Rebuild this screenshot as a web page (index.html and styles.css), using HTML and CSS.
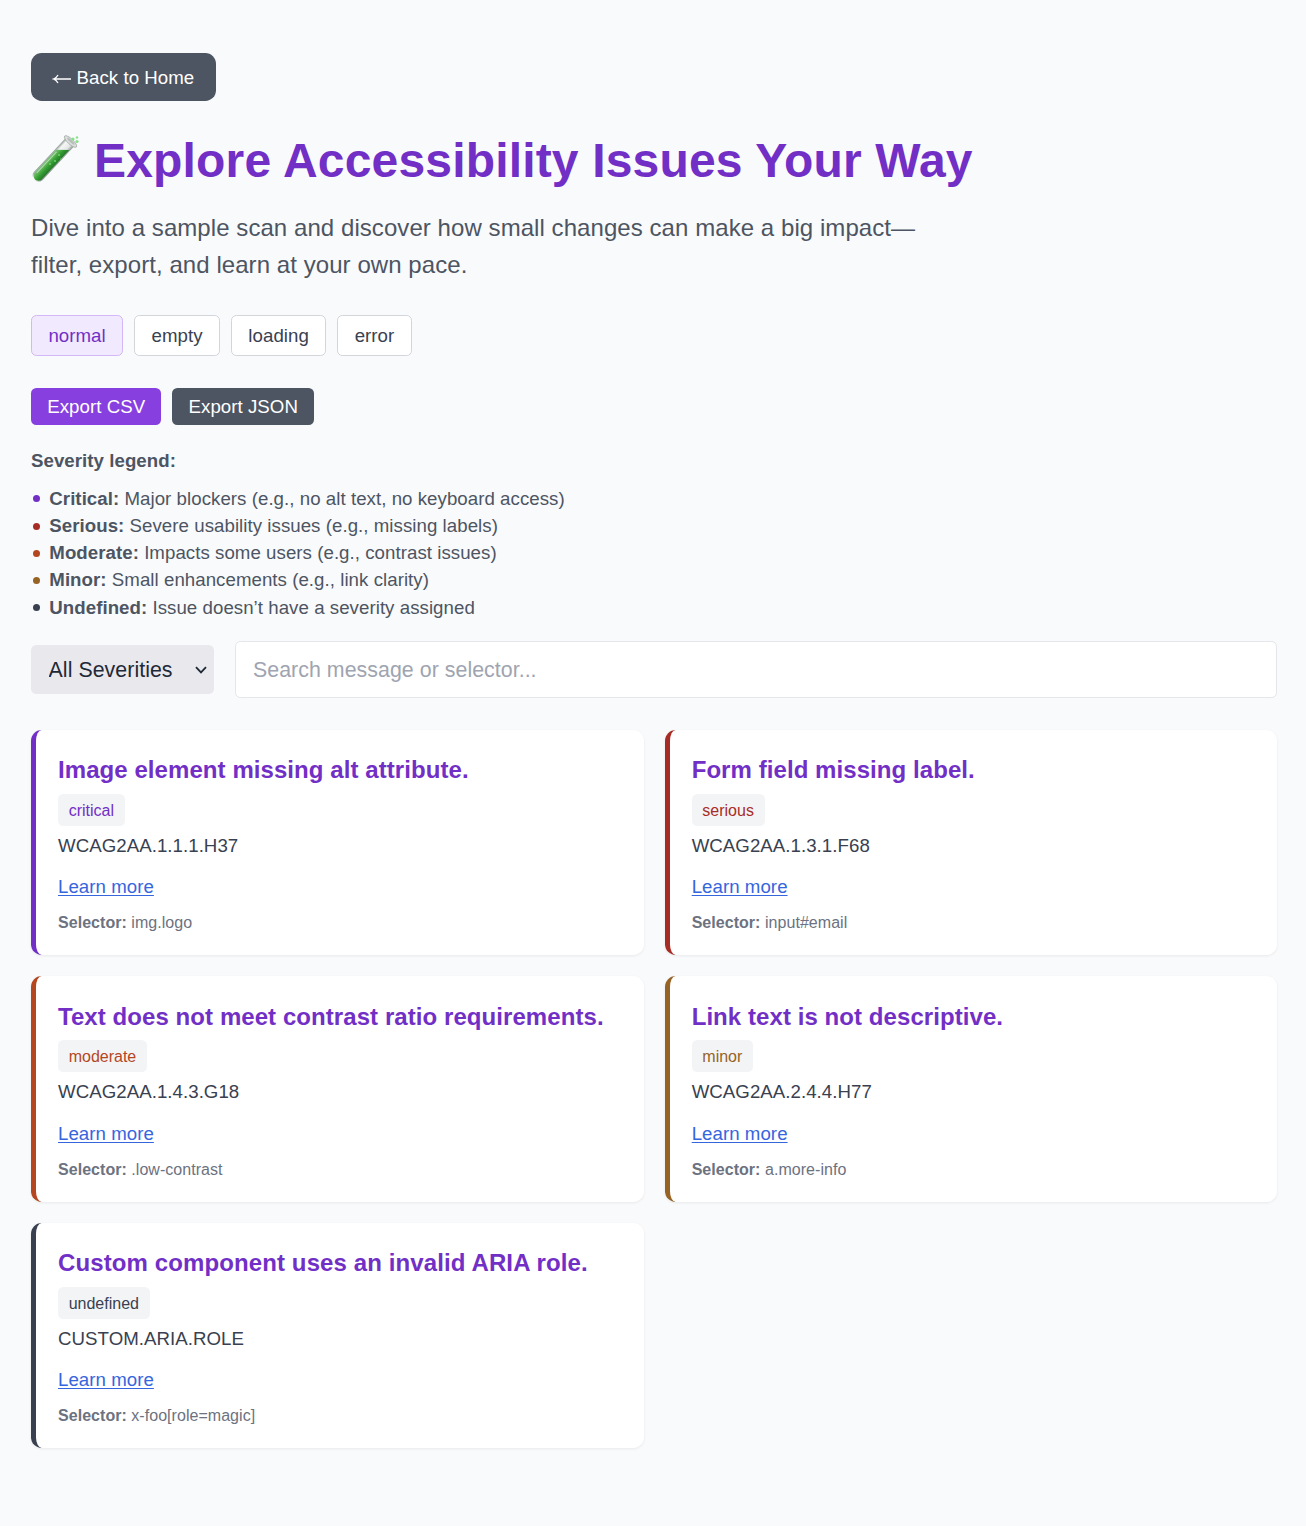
FILE: index.html
```html
<!DOCTYPE html>
<html lang="en">
<head>
<meta charset="utf-8">
<title>Explore Accessibility Issues Your Way</title>
<link rel="stylesheet" href="styles.css">
</head>
<body>
<main class="page">
  <a class="back" href="#"><svg class="arrow" viewBox="0 0 20 12" aria-hidden="true"><path d="M1.5 6H19M6 2Q4.4 5 1.5 6Q4.4 7 6 10"/></svg>Back to Home</a>
  <h1 class="heading">
    <svg class="tube" viewBox="0 0 48 50" aria-hidden="true">
      <defs>
        <linearGradient id="glass" x1="0" y1="0" x2="1" y2="0"><stop offset="0" stop-color="#8f9a94"/><stop offset=".25" stop-color="#f5f7f6"/><stop offset=".7" stop-color="#e4e8e6"/><stop offset="1" stop-color="#8b9690"/></linearGradient>
        <linearGradient id="liquid" x1="0" y1="0" x2="1" y2="0"><stop offset="0" stop-color="#7fbd80"/><stop offset=".3" stop-color="#57b24f"/><stop offset=".6" stop-color="#319b30"/><stop offset="1" stop-color="#26772b"/></linearGradient>
      </defs>
      <g transform="translate(39.5 6.5) rotate(43)">
        <path d="M-5.9 1V47a5.9 5.9 0 0 0 11.8 0V1Z" fill="url(#glass)"/>
        <path d="M-4.9 16L4.9 7V47a4.9 4.9 0 0 1-9.8 0Z" fill="url(#liquid)"/>
        <path d="M-3.2 17V46" stroke="#c2e3bf" stroke-width="1.1" opacity=".8"/>
        <ellipse cy="0" rx="8" ry="2.7" fill="#dde0de" stroke="#a3aaa6" stroke-width=".8"/>
        <ellipse cy="-.5" rx="5" ry="1.2" fill="#b5bfb8"/>
      </g>
      <g fill="#6fd069"><circle cx="28" cy="20" r="1"/><circle cx="24" cy="26" r="1.1"/><circle cx="19" cy="29" r="1"/><circle cx="30" cy="24" r=".8"/></g>
      <g fill="#87e28a"><circle cx="42" cy="4" r="1.6"/><circle cx="46" cy="2.5" r="1.2"/><circle cx="46" cy="6.5" r="1.6"/></g>
    </svg>Explore Accessibility Issues Your Way</h1>
  <p class="intro">Dive into a sample scan and discover how small changes can make a big impact—filter, export, and learn at your own pace.</p>

  <div class="states">
    <button class="state active">normal</button>
    <button class="state">empty</button>
    <button class="state">loading</button>
    <button class="state">error</button>
  </div>
  <div class="exports">
    <button class="export primary">Export CSV</button>
    <button class="export">Export JSON</button>
  </div>

  <section class="legend">
    <p class="legend-title">Severity legend:</p>
    <ul class="legend-list">
      <li class="critical"><span><strong>Critical:</strong> Major blockers (e.g., no alt text, no keyboard access)</span></li>
      <li class="serious"><span><strong>Serious:</strong> Severe usability issues (e.g., missing labels)</span></li>
      <li class="moderate"><span><strong>Moderate:</strong> Impacts some users (e.g., contrast issues)</span></li>
      <li class="minor"><span><strong>Minor:</strong> Small enhancements (e.g., link clarity)</span></li>
      <li class="undefined"><span><strong>Undefined:</strong> Issue doesn’t have a severity assigned</span></li>
    </ul>
  </section>

  <div class="filters">
    <div class="select-wrap">
      <select class="select" aria-label="Severity"><option>All Severities</option></select>
      <svg class="chevron" viewBox="0 0 12 8" aria-hidden="true"><path d="M1 1.2L6 6.4L11 1.2"/></svg>
    </div>
    <input class="search" type="text" placeholder="Search message or selector...">
  </div>

  <div class="cards">
    <article class="card critical">
      <h2 class="title">Image element missing alt attribute.</h2>
      <span class="badge">critical</span>
      <p class="code">WCAG2AA.1.1.1.H37</p>
      <a class="learn" href="#">Learn more</a>
      <p class="selector"><strong>Selector:</strong> img.logo</p>
    </article>
    <article class="card serious">
      <h2 class="title">Form field missing label.</h2>
      <span class="badge">serious</span>
      <p class="code">WCAG2AA.1.3.1.F68</p>
      <a class="learn" href="#">Learn more</a>
      <p class="selector"><strong>Selector:</strong> input#email</p>
    </article>
    <article class="card moderate">
      <h2 class="title">Text does not meet contrast ratio requirements.</h2>
      <span class="badge">moderate</span>
      <p class="code">WCAG2AA.1.4.3.G18</p>
      <a class="learn" href="#">Learn more</a>
      <p class="selector"><strong>Selector:</strong> .low-contrast</p>
    </article>
    <article class="card minor">
      <h2 class="title">Link text is not descriptive.</h2>
      <span class="badge">minor</span>
      <p class="code">WCAG2AA.2.4.4.H77</p>
      <a class="learn" href="#">Learn more</a>
      <p class="selector"><strong>Selector:</strong> a.more-info</p>
    </article>
    <article class="card undefined">
      <h2 class="title">Custom component uses an invalid ARIA role.</h2>
      <span class="badge">undefined</span>
      <p class="code">CUSTOM.ARIA.ROLE</p>
      <a class="learn" href="#">Learn more</a>
      <p class="selector"><strong>Selector:</strong> x-foo[role=magic]</p>
    </article>
  </div>
</main>
</body>
</html>
```
FILE: styles.css
```css
*, *::before, *::after { box-sizing: border-box; }

body {
  margin: 0;
  background: #f9fafc;
  color: #4d5562;
  font-family: "Liberation Sans", Arial, sans-serif;
  font-size: 18.67px;
  line-height: 26.67px;
  letter-spacing: .05px;
}

h1, h2, p, ul { margin: 0; padding: 0; }
button, input, select { font: inherit; letter-spacing: inherit; margin: 0; }

.critical { --severity: #712fc6; }
.serious { --severity: #a82c26; }
.moderate { --severity: #b4471f; }
.minor { --severity: #966324; }
.undefined { --severity: #394150; }

.page { padding: 53px 29px 77px 31px; }

.back {
  display: inline-flex;
  align-items: center;
  width: 185px;
  height: 48px;
  padding: 2px 0 0 21px;
  gap: 4.5px;
  border-radius: 10.67px;
  background: #4d5562;
  color: #fff;
  text-decoration: none;
  vertical-align: top;
}
.arrow { width: 20px; height: 12px; margin-top: 1px; fill: none; stroke: #fff; stroke-width: 1.3; }

.heading {
  display: flex;
  align-items: center;
  gap: 15px;
  height: 53px;
  margin-top: 33px;
  color: #712fc6;
  font-size: 48px;
  line-height: 53px;
  letter-spacing: .17px;
}
.tube { width: 48px; height: 50px; margin-top: -1px; }

.intro {
  width: 896px;
  margin-top: 22px;
  font-size: 24px;
  line-height: 37.33px;
  letter-spacing: .065px;
}

.states { display: flex; gap: 11px; margin-top: 31px; }
.state {
  height: 41px;
  padding: 2px 16.4px 0;
  border: 1px solid #d2d5da;
  border-radius: 5.33px;
  background: #fff;
  color: #394150;
}
.state.active { border-color: #d3b7f7; background: #f1e9fd; color: #712fc6; }

.exports { display: flex; gap: 11px; margin-top: 32px; }
.export {
  height: 37px;
  padding: 2px 16.2px 0;
  border: 0;
  border-radius: 5.33px;
  background: #4d5562;
  color: #fff;
}
.export.primary { background: #883fe0; }

.legend { margin-top: 23px; }
.legend-title { font-weight: bold; }
.legend-list { margin-top: 10.4px; list-style: none; line-height: 27.2px; }
.legend-list li { display: flex; align-items: center; gap: 9.3px; padding-left: 2px; }
.legend-list li::before {
  content: "";
  width: 7px;
  height: 7px;
  margin-top: 1px;
  border-radius: 50%;
  background: var(--severity);
}

.filters { display: flex; align-items: center; gap: 21px; margin-top: 20.6px; font-size: 21.33px; }
.select-wrap { position: relative; width: 183px; height: 49px; }
.select {
  width: 100%;
  height: 100%;
  padding: 2px 18px 0 17.6px;
  border: 0;
  border-radius: 5.33px;
  appearance: none;
  background: #e9e8ed;
  color: #1f2937;
}
.chevron {
  position: absolute;
  top: 21px;
  right: 7px;
  width: 12px;
  height: 8px;
  fill: none;
  stroke: #1f2937;
  stroke-width: 1.8;
  pointer-events: none;
}
.search {
  flex: 1;
  height: 57px;
  padding: 1px 17px 0;
  border: 1px solid #e4e6ea;
  border-radius: 5.33px;
  background: #fff;
}
.search::placeholder { color: #9ea4b0; opacity: 1; }

.cards {
  display: grid;
  grid-template-columns: 612.67px 612.33px;
  gap: 21.33px 21px;
  margin-top: 31.35px;
}
.card {
  display: flex;
  flex-direction: column;
  align-items: flex-start;
  height: 225.3px;
  padding: 21.33px 21.33px 20px 22px;
  border-left: 5px solid var(--severity);
  border-radius: 10.67px;
  background: #fff;
  box-shadow: 0 1px 3px rgba(0, 0, 0, .07);
}
.title { color: #712fc6; font-size: 24px; line-height: 37.33px; letter-spacing: .07px; }
.badge {
  margin-top: 5.5px;
  padding: 5.8px 10.67px 4.8px;
  border-radius: 5.33px;
  background: #f3f4f6;
  color: var(--severity);
  font-size: 16px;
  line-height: 21.33px;
  letter-spacing: 0;
}
.code { margin-top: 7.1px; color: #394150; }
.learn { margin-top: 14.4px; color: #3566de; text-underline-offset: 2px; text-decoration-thickness: 1px; }
.selector { margin-top: 11.6px; color: #6c727f; font-size: 16px; line-height: 21.33px; letter-spacing: .04px; }
.undefined .title { letter-spacing: .11px; }
```
